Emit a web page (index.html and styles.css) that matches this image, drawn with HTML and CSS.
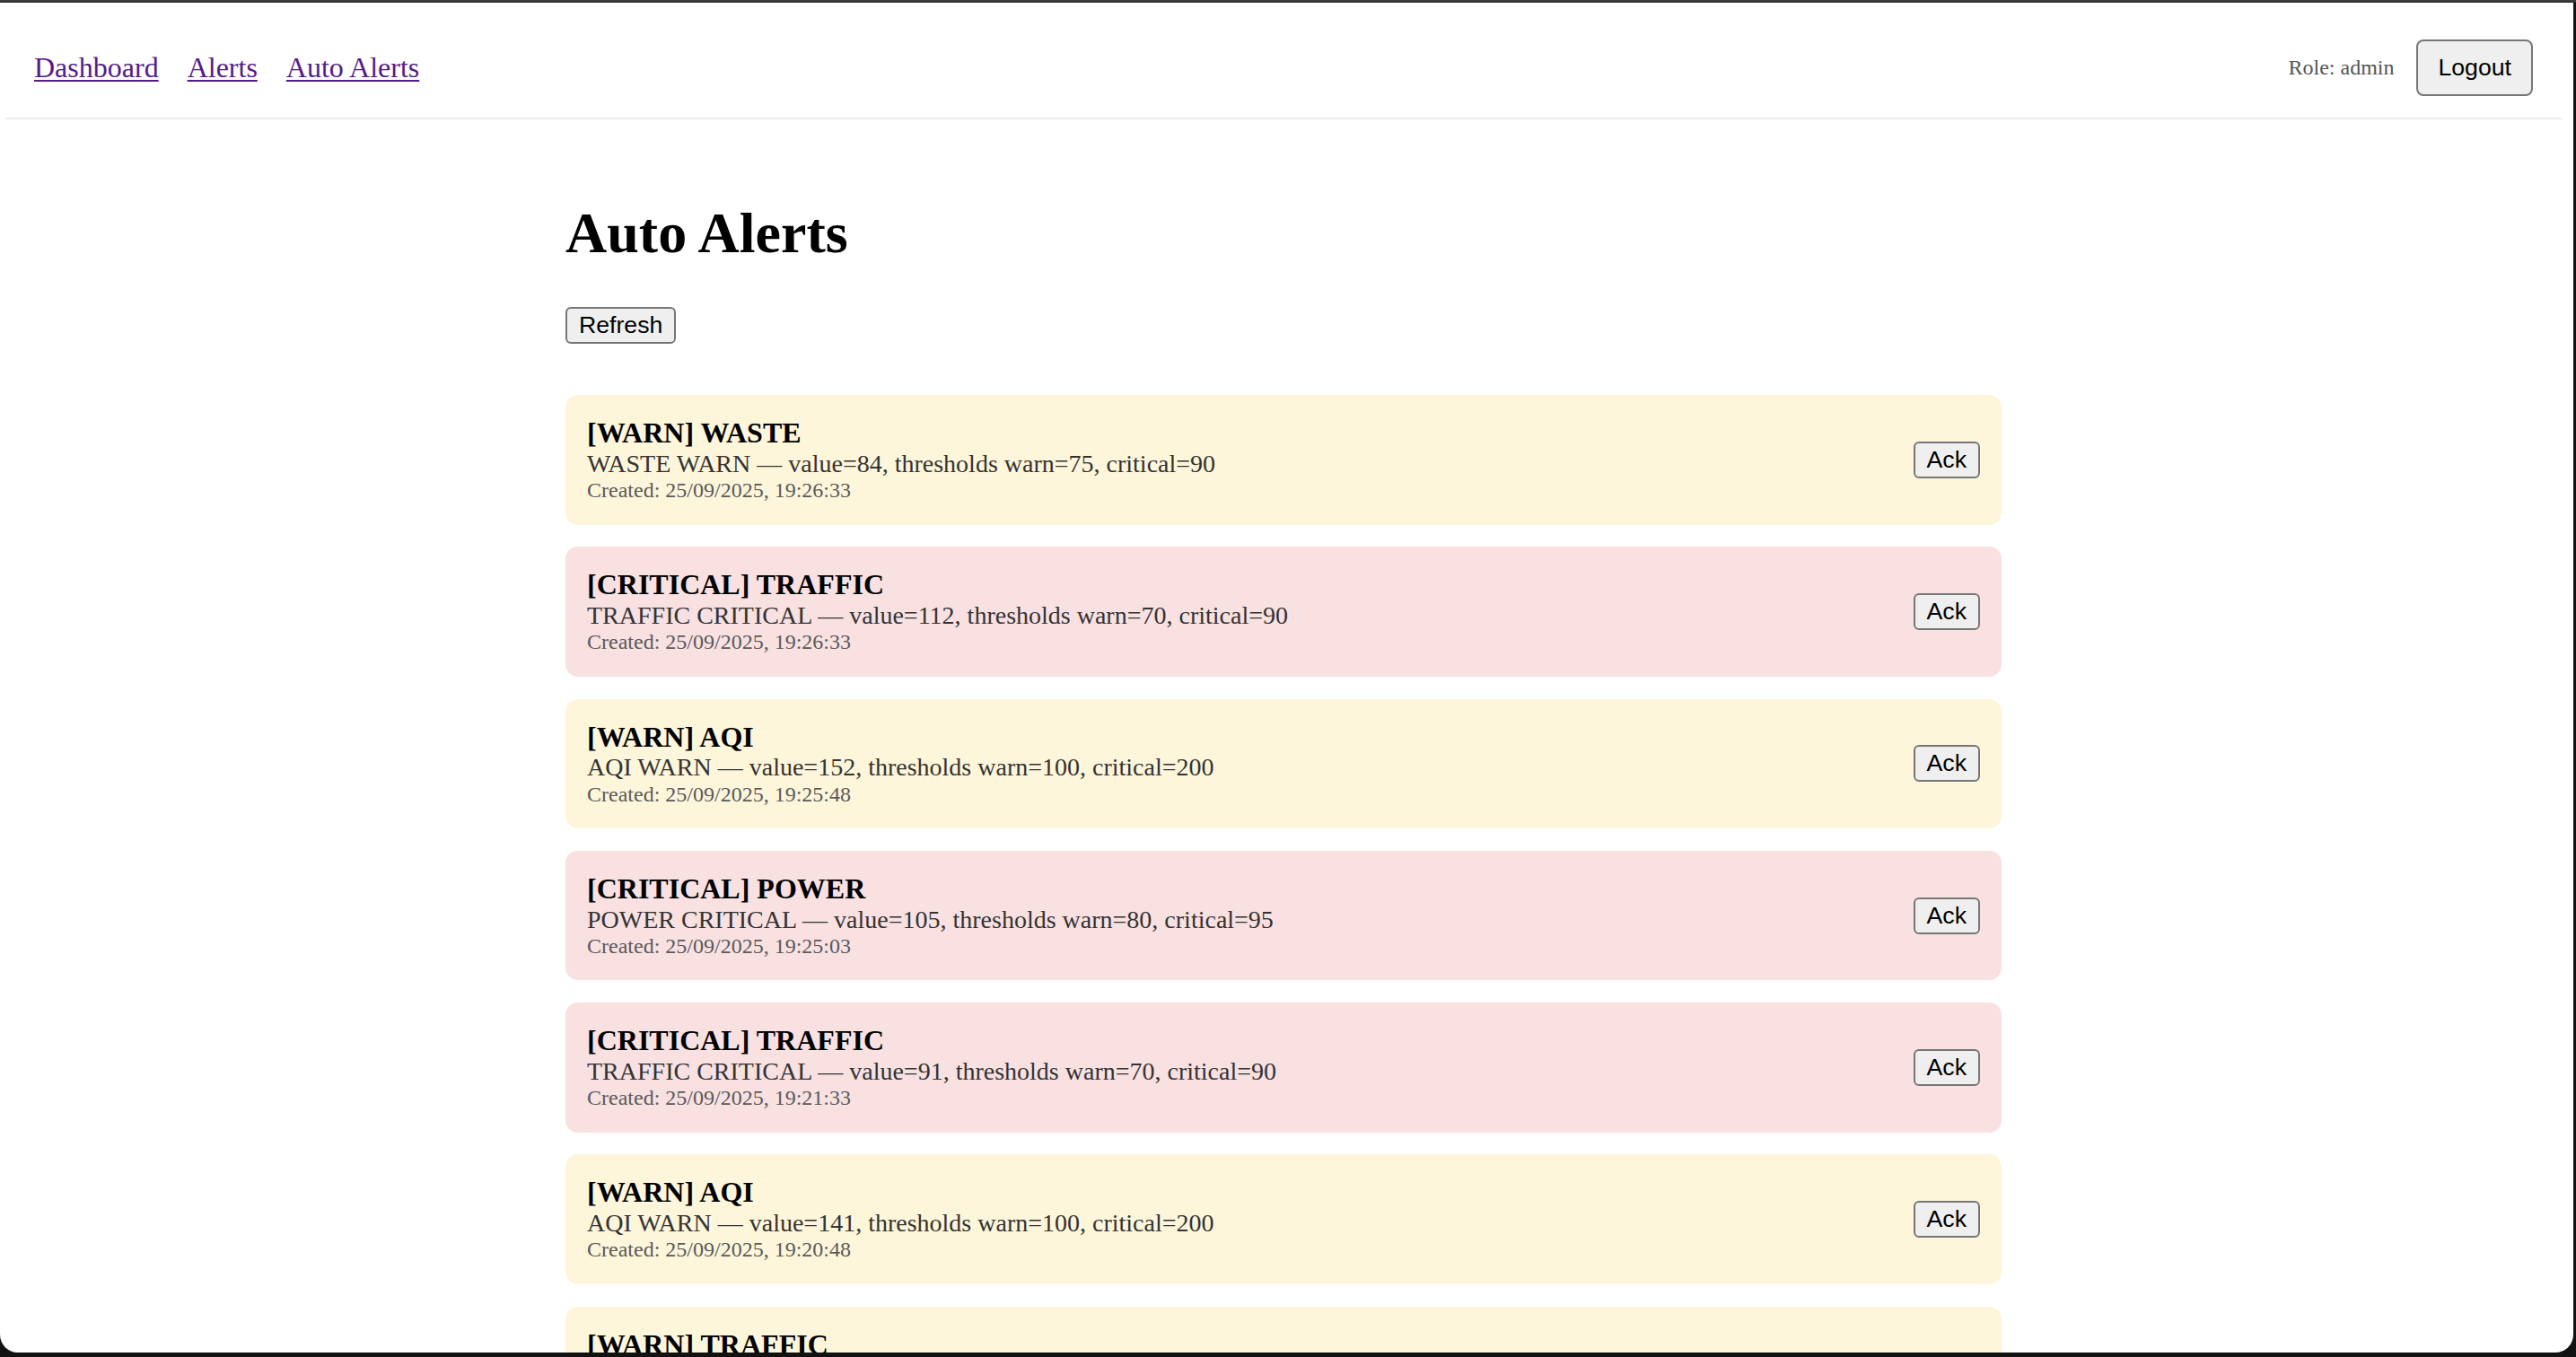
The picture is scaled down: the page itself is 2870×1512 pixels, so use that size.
FILE: index.html
```html
<!DOCTYPE html>
<html lang="en">
<head>
<meta charset="utf-8">
<title>Auto Alerts</title>
<link rel="stylesheet" href="styles.css">
</head>
<body>
<div class="window">
  <header class="topbar">
    <nav class="nav">
      <a href="#dashboard">Dashboard</a>
      <a href="#alerts">Alerts</a>
      <a href="#auto-alerts">Auto Alerts</a>
    </nav>
    <div class="user">
      <span class="role">Role: admin</span>
      <button class="btn btn-logout" type="button">Logout</button>
    </div>
  </header>

  <main class="content">
    <h1 class="page-title">Auto Alerts</h1>
    <button class="btn" type="button">Refresh</button>

    <ul class="alert-list">
      <li class="alert alert-warn">
        <div class="alert-body">
          <div class="alert-title">[WARN] WASTE</div>
          <div class="alert-desc">WASTE WARN — value=84, thresholds warn=75, critical=90</div>
          <div class="alert-meta">Created: 25/09/2025, 19:26:33</div>
        </div>
        <button class="btn" type="button">Ack</button>
      </li>
      <li class="alert alert-critical">
        <div class="alert-body">
          <div class="alert-title">[CRITICAL] TRAFFIC</div>
          <div class="alert-desc">TRAFFIC CRITICAL — value=112, thresholds warn=70, critical=90</div>
          <div class="alert-meta">Created: 25/09/2025, 19:26:33</div>
        </div>
        <button class="btn" type="button">Ack</button>
      </li>
      <li class="alert alert-warn">
        <div class="alert-body">
          <div class="alert-title">[WARN] AQI</div>
          <div class="alert-desc">AQI WARN — value=152, thresholds warn=100, critical=200</div>
          <div class="alert-meta">Created: 25/09/2025, 19:25:48</div>
        </div>
        <button class="btn" type="button">Ack</button>
      </li>
      <li class="alert alert-critical">
        <div class="alert-body">
          <div class="alert-title">[CRITICAL] POWER</div>
          <div class="alert-desc">POWER CRITICAL — value=105, thresholds warn=80, critical=95</div>
          <div class="alert-meta">Created: 25/09/2025, 19:25:03</div>
        </div>
        <button class="btn" type="button">Ack</button>
      </li>
      <li class="alert alert-critical">
        <div class="alert-body">
          <div class="alert-title">[CRITICAL] TRAFFIC</div>
          <div class="alert-desc">TRAFFIC CRITICAL — value=91, thresholds warn=70, critical=90</div>
          <div class="alert-meta">Created: 25/09/2025, 19:21:33</div>
        </div>
        <button class="btn" type="button">Ack</button>
      </li>
      <li class="alert alert-warn">
        <div class="alert-body">
          <div class="alert-title">[WARN] AQI</div>
          <div class="alert-desc">AQI WARN — value=141, thresholds warn=100, critical=200</div>
          <div class="alert-meta">Created: 25/09/2025, 19:20:48</div>
        </div>
        <button class="btn" type="button">Ack</button>
      </li>
      <li class="alert alert-warn">
        <div class="alert-body">
          <div class="alert-title">[WARN] TRAFFIC</div>
          <div class="alert-desc">TRAFFIC WARN — value=78, thresholds warn=70, critical=90</div>
          <div class="alert-meta">Created: 25/09/2025, 19:20:03</div>
        </div>
        <button class="btn" type="button">Ack</button>
      </li>
    </ul>
  </main>
</div>
</body>
</html>
```

FILE: styles.css
```css
html, body {
  margin: 0;
  padding: 0;
}

body {
  width: 2870px;
  height: 1512px;
  overflow: hidden;
  background: linear-gradient(#3d3e40 0, #2c2d2f 3px, #121212 3px);
  font-family: "Liberation Serif", "Times New Roman", serif;
}

.window {
  box-sizing: border-box;
  width: 2867px;
  height: 1504px;
  margin-top: 3px;
  padding: 17px 13px 0 6px;
  background: #ffffff;
  border-radius: 0 0 20px 20px;
  overflow: hidden;
}

.topbar {
  display: flex;
  align-items: center;
  justify-content: space-between;
  padding: 24px 32px;
  border-bottom: 2px solid #ebebeb;
}

.nav {
  display: flex;
  gap: 32px;
  font-size: 32px;
  line-height: 1.15;
}

.nav a {
  color: #551a8b;
  text-decoration: underline;
  text-decoration-thickness: 2px;
  text-underline-offset: 3px;
}

.user {
  display: flex;
  align-items: center;
  gap: 25px;
}

.role {
  font-size: 24px;
  color: #555555;
}

.btn {
  font-family: "Liberation Sans", Arial, sans-serif;
  font-size: 26.67px;
  line-height: normal;
  color: #000000;
  background: #efefef;
  border: 2px solid #767676;
  border-radius: 6px;
  padding: 3px 13px;
  margin: 0;
}

.btn-logout {
  padding: 14px 22px;
  border-radius: 8px;
}

.content {
  width: 1600px;
  margin: 0 auto;
}

.page-title {
  font-size: 64px;
  line-height: 72px;
  font-weight: bold;
  margin: 91px 0 46px;
}

.alert-list {
  list-style: none;
  margin: 57px 0 0;
  padding: 0;
  display: flex;
  flex-direction: column;
  gap: 24.7px;
}

.alert {
  display: flex;
  align-items: center;
  justify-content: space-between;
  padding: 24px;
  border-radius: 14px;
}

.alert-warn {
  background: #fef6da;
}

.alert-critical {
  background: #f9e1e2;
}

.alert-title {
  font-size: 32px;
  line-height: 1.15;
  font-weight: bold;
  color: #000000;
}

.alert-desc {
  font-size: 28px;
  line-height: 1.15;
  color: #333333;
}

.alert-meta {
  font-size: 24px;
  line-height: 1.15;
  color: #5a5a5a;
}
```
